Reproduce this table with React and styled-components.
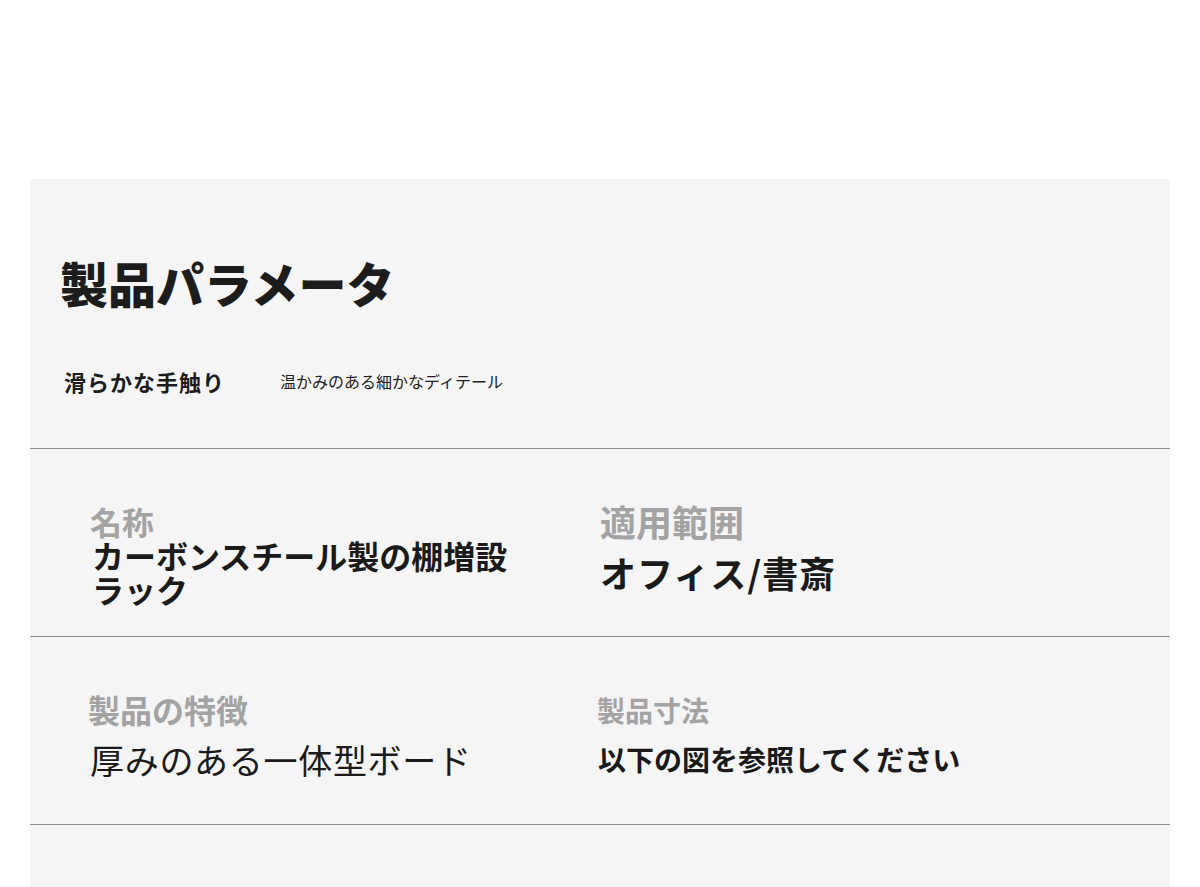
import React from "react";
import styled, { createGlobalStyle } from "styled-components";

const Global = createGlobalStyle`
  html, body {
    margin: 0;
    padding: 0;
    background: #ffffff;
    font-family: "Noto Sans CJK JP", "Noto Sans", sans-serif;
    color: #1a1a1a;
  }
`;

const Page = styled.div`
  padding: 179px 30px 0;
  height: 887px;
  box-sizing: border-box;
  overflow: hidden;
`;

const Panel = styled.section`
  background: #f5f5f5;
  min-height: 708px;
`;

const Header = styled.header`
  padding: 79px 30px 0;
  height: 270px;
  box-sizing: border-box;
  border-bottom: 1px solid #8a8a8a;
`;

const Title = styled.h1`
  margin: 0;
  font-size: 48px;
  line-height: 48px;
  font-weight: 900;
  color: #1c1c1c;
`;

const SubRow = styled.div`
  display: flex;
  align-items: center;
  margin-top: 64px;
  padding-left: 4px;
  gap: 55px;
`;

const SubStrong = styled.span`
  font-size: 22px;
  line-height: 22px;
  font-weight: 700;
  letter-spacing: 1px;
  color: #1c1c1c;
`;

const SubLight = styled.span`
  font-size: 16px;
  line-height: 16px;
  font-weight: 400;
  color: #222;
`;

const Row = styled.div`
  display: grid;
  grid-template-columns: 510px 1fr;
  padding-left: 60px;
  height: 188px;
  box-sizing: border-box;
  border-bottom: ${(p) => (p.$last ? "none" : "1px solid #8a8a8a")};
`;

const Cell = styled.div`
  padding-top: ${(p) => p.$top}px;
  padding-right: ${(p) => p.$right || 0}px;
  margin-left: ${(p) => p.$shift || 0}px;
`;

const Label = styled.div`
  font-size: ${(p) => p.$size}px;
  line-height: ${(p) => p.$size}px;
  font-weight: 700;
  color: #a3a3a3;
`;

const Value = styled.div`
  margin-top: ${(p) => p.$gap}px;
  font-size: ${(p) => p.$size}px;
  line-height: ${(p) => p.$lh || p.$size}px;
  font-weight: ${(p) => (p.$light ? 400 : 700)};
  letter-spacing: ${(p) => p.$track || 0}px;
  color: #1a1a1a;
  padding-left: ${(p) => p.$indent || 0}px;
`;

export default function App() {
  return (
    <>
      <Global />
      <Page>
        <Panel>
          <Header>
            <Title>製品パラメータ</Title>
            <SubRow>
              <SubStrong>滑らかな手触り</SubStrong>
              <SubLight>温かみのある細かなディテール</SubLight>
            </SubRow>
          </Header>
          <Row>
            <Cell $top={56} $right={70}>
              <Label $size={32}>名称</Label>
              <Value $size={32} $lh={34} $gap={1} $indent={2}>
                カーボンスチール製の棚増設ラック
              </Value>
            </Cell>
            <Cell $top={54}>
              <Label $size={36}>適用範囲</Label>
              <Value $size={36} $gap={15} $track={1}>
                オフィス/書斎
              </Value>
            </Cell>
          </Row>
          <Row>
            <Cell $top={56} $shift={-2}>
              <Label $size={32}>製品の特徴</Label>
              <Value $size={34} $gap={18} $light $indent={2} $track={0.7}>
                厚みのある一体型ボード
              </Value>
            </Cell>
            <Cell $top={59} $shift={-3}>
              <Label $size={28}>製品寸法</Label>
              <Value $size={28} $gap={21} $indent={1}>
                以下の図を参照してください
              </Value>
            </Cell>
          </Row>
          <Row $last />
        </Panel>
      </Page>
    </>
  );
}
